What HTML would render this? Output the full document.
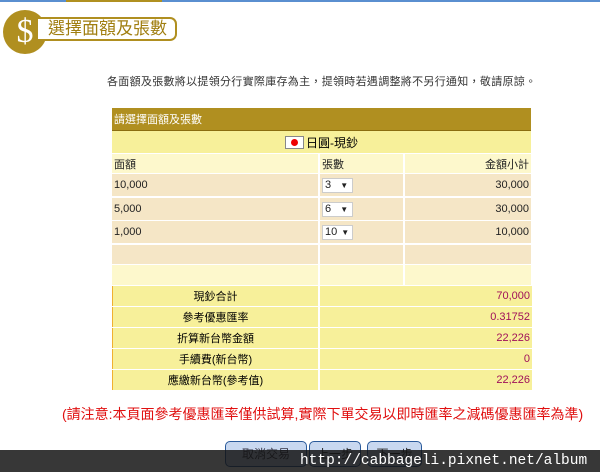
<!DOCTYPE html><html><head><meta charset="utf-8"><style>
body{margin:0;width:600px;height:472px;background:#fff;position:relative;overflow:hidden;font-family:"Liberation Sans","Noto Sans CJK TC",sans-serif;font-size:11px;color:#222}
.a{position:absolute}
.row{position:absolute;left:112px;width:419px;display:flex}
.row div{box-sizing:border-box;height:100%;display:flex;align-items:center;padding:0 2px}
</style></head><body>
<div class="a" style="left:0;top:0;width:600px;height:2px;background:#5a8fd0"></div>
<div class="a" style="left:66px;top:0;width:96px;height:2px;background:#b09020"></div>
<div class="a" style="left:3px;top:10px;width:44px;height:44px;border-radius:50%;background:#b08f20;color:#fff;font-size:34px;text-align:center;line-height:44px;font-family:'Liberation Serif',serif">$</div>
<div class="a" style="left:38px;top:17px;width:139px;height:24px;border:2px solid #b08f20;border-left:none;border-radius:0 7px 7px 0;background:#fff;box-sizing:border-box"></div>
<div class="a" style="left:48px;top:18px;font-size:17px;color:#a07e10;line-height:22px">選擇面額及張數</div>
<div class="a" style="left:107px;top:73px;font-size:11px;color:#333;letter-spacing:0.3px">各面額及張數將以提領分行實際庫存為主，提領時若遇調整將不另行通知，敬請原諒。</div>
<div class="row" style="top:108px;height:22px;background:#b08f20;color:#fff;border-bottom:1px solid #8a6d10"><div>請選擇面額及張數</div></div>
<div class="row" style="top:131px;height:22px;background:#f7f09a;justify-content:center;font-size:12px;color:#000;align-items:center"><span style="display:inline-block;width:17px;height:11px;border:1px solid #888;background:#fff;position:relative;margin-right:2px"><span style="position:absolute;left:5px;top:2px;width:7px;height:7px;border-radius:50%;background:#e00"></span></span>日圓-現鈔</div>
<div class="row" style="top:154px;height:19px;background:#fdf8cc"><div style="width:208px;border-right:2px solid #fff">面額</div><div style="width:85px;border-right:2px solid #fff">張數</div><div style="flex:1;justify-content:flex-end">金額小計</div></div>
<div class="row" style="top:174px;height:22px;background:#f5e6c6"><div style="width:208px;border-right:2px solid #fff">10,000</div><div style="width:85px;border-right:2px solid #fff"><span style="background:#fff;border:1px solid #ccc;width:31px;height:15px;display:inline-block;font-size:11px;padding-left:2px;box-sizing:border-box">3 <b style="font-size:8px;margin-left:6px">▼</b></span></div><div style="flex:1;justify-content:flex-end">30,000</div></div>
<div class="row" style="top:198px;height:22px;background:#f5e6c6"><div style="width:208px;border-right:2px solid #fff">5,000</div><div style="width:85px;border-right:2px solid #fff"><span style="background:#fff;border:1px solid #ccc;width:31px;height:15px;display:inline-block;padding-left:2px;box-sizing:border-box">6 <b style="font-size:8px;margin-left:6px">▼</b></span></div><div style="flex:1;justify-content:flex-end">30,000</div></div>
<div class="row" style="top:221px;height:22px;background:#f5e6c6"><div style="width:208px;border-right:2px solid #fff">1,000</div><div style="width:85px;border-right:2px solid #fff"><span style="background:#fff;border:1px solid #ccc;width:31px;height:15px;display:inline-block;padding-left:2px;box-sizing:border-box">10 <b style="font-size:8px;margin-left:1px">▼</b></span></div><div style="flex:1;justify-content:flex-end">10,000</div></div>
<div class="row" style="top:245px;height:19px;background:#f5e6c6"><div style="width:208px;border-right:2px solid #fff"></div><div style="width:85px;border-right:2px solid #fff"></div></div>
<div class="row" style="top:265px;height:20px;background:#fdf8cc"><div style="width:208px;border-right:2px solid #fff"></div><div style="width:85px;border-right:2px solid #fff"></div></div>
<div class="row" style="top:286px;height:20px;background:#f7f09a;border-left:1px solid #f0b030"><div style="width:207px;border-right:2px solid #fff;justify-content:center;color:#000">現鈔合計</div><div style="flex:1;justify-content:flex-end;color:#a0105a">70,000</div></div>
<div class="row" style="top:307px;height:20px;background:#f7f09a;border-left:1px solid #f0b030"><div style="width:207px;border-right:2px solid #fff;justify-content:center;color:#000">參考優惠匯率</div><div style="flex:1;justify-content:flex-end;color:#a0105a">0.31752</div></div>
<div class="row" style="top:328px;height:20px;background:#f7f09a;border-left:1px solid #f0b030"><div style="width:207px;border-right:2px solid #fff;justify-content:center;color:#000">折算新台幣金額</div><div style="flex:1;justify-content:flex-end;color:#a0105a">22,226</div></div>
<div class="row" style="top:349px;height:20px;background:#f7f09a;border-left:1px solid #f0b030"><div style="width:207px;border-right:2px solid #fff;justify-content:center;color:#000">手續費(新台幣)</div><div style="flex:1;justify-content:flex-end;color:#a0105a">0</div></div>
<div class="row" style="top:370px;height:20px;background:#f7f09a;border-left:1px solid #f0b030"><div style="width:207px;border-right:2px solid #fff;justify-content:center;color:#000">應繳新台幣(參考值)</div><div style="flex:1;justify-content:flex-end;color:#a0105a">22,226</div></div>
<div class="a" style="left:62px;top:404px;font-size:14px;color:#e01010;white-space:nowrap">(請注意:本頁面參考優惠匯率僅供試算,實際下單交易以即時匯率之減碼優惠匯率為準)</div>
<div class="a" style="left:225px;top:441px;width:80px;height:24px;border:1px solid #2a5a9a;border-radius:5px;background:#c8d8f0;font-size:12px;text-align:center;line-height:24px;color:#334">取消交易</div>
<div class="a" style="left:309px;top:441px;width:50px;height:24px;border:1px solid #2a5a9a;border-radius:5px;background:#c8d8f0;font-size:12px;text-align:center;line-height:24px">上一步</div>
<div class="a" style="left:367px;top:441px;width:53px;height:24px;border:1px solid #2a5a9a;border-radius:5px;background:#c8d8f0;font-size:12px;text-align:center;line-height:24px">下一步</div>
<div class="a" style="left:0;top:450px;width:600px;height:22px;background:rgba(20,20,20,.85)"></div>
<div class="a" style="left:300px;top:450px;font-family:'Liberation Mono',monospace;font-size:14.5px;color:#fff;line-height:22px">http://cabbageli.pixnet.net/album</div>
</body></html>
